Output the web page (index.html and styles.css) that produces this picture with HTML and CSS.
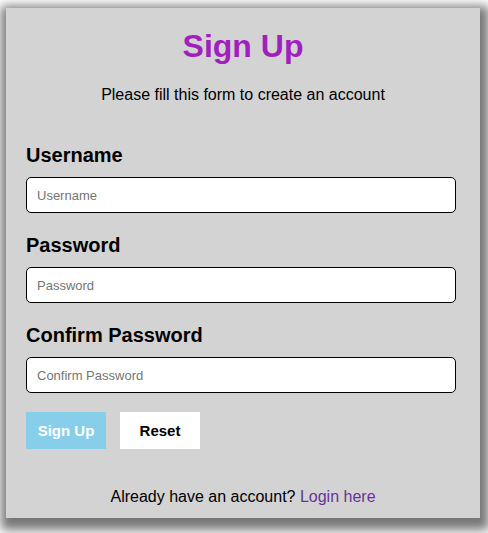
FILE: index.html
```html
<!DOCTYPE html>
<html lang="en">
<head>
    <meta charset="UTF-8">
    <meta name="viewport" content="width=device-width, initial-scale=1.0">
    <title>Sign Up</title>
    <link rel="stylesheet" href="styles.css">
</head>
<body>
    <div class="form-box">
        <h1>Sign Up</h1>
        <p class="intro">Please fill this form to create an account</p>

        <form>
            <label for="username">Username</label>
            <input type="text" id="username" placeholder="Username">

            <label for="password">Password</label>
            <input type="password" id="password" placeholder="Password">

            <label for="confirm">Confirm Password</label>
            <input type="password" id="confirm" placeholder="Confirm Password">

            <div class="buttons">
                <button type="submit" class="btn-signup">Sign Up</button>
                <button type="reset" class="btn-reset">Reset</button>
            </div>
        </form>

        <p class="login">Already have an account? <a href="#">Login here</a></p>
    </div>
</body>
</html>
```

FILE: styles.css
```css
body {
    font-family: 'Liberation Sans', Arial, sans-serif;
    background-color: #ffffff;
    margin: 0;
    padding: 8px 0 16px 0;
}

.form-box {
    width: 474px;
    box-sizing: border-box;
    margin: 0 0 0 6px;
    padding: 20px 20px 12px 20px;
    background-color: #d3d3d3;
    box-shadow: 2px 5px 10px 7px #777;
}

h1 {
    color: #a21fbf;
    font-size: 32px;
    text-align: center;
    margin: 0;
    line-height: 37px;
}

.intro {
    text-align: center;
    font-size: 16px;
    margin: 21px 0 40px 0;
}

label {
    display: block;
    font-size: 20px;
    font-weight: bold;
    line-height: 23px;
    margin-bottom: 10px;
}

input {
    display: block;
    width: 430px;
    height: 36px;
    box-sizing: border-box;
    padding: 0 10px;
    margin-bottom: 21px;
    border: 1px solid #000;
    border-radius: 5px;
    font-family: 'Liberation Sans', Arial, sans-serif;
    font-size: 13px;
}

input::placeholder {
    color: #757575;
}

.buttons {
    display: flex;
    gap: 14px;
    margin-top: -2px;
}

button {
    width: 80px;
    height: 37px;
    border: none;
    font-family: 'Liberation Sans', Arial, sans-serif;
    font-size: 15px;
    font-weight: bold;
    cursor: pointer;
}

.btn-signup {
    background-color: #87ceeb;
    color: #fff;
}

.btn-reset {
    background-color: #fff;
    color: #000;
}

.login {
    text-align: center;
    font-size: 16px;
    margin: 39px 0 0 0;
}

.login a {
    color: #663399;
    text-decoration: none;
}
```
